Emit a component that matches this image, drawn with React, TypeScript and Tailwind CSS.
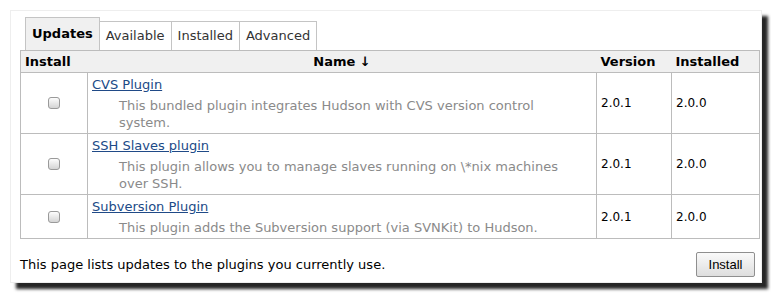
import React from "react";

const plugins = [
  {
    name: "CVS Plugin",
    desc: "This bundled plugin integrates Hudson with CVS version control system.",
    version: "2.0.1",
    installed: "2.0.0",
  },
  {
    name: "SSH Slaves plugin",
    desc: "This plugin allows you to manage slaves running on \\*nix machines over SSH.",
    version: "2.0.1",
    installed: "2.0.0",
  },
  {
    name: "Subversion Plugin",
    desc: "This plugin adds the Subversion support (via SVNKit) to Hudson.",
    version: "2.0.1",
    installed: "2.0.0",
  },
];

function Checkbox() {
  return (
    <div className="mx-auto h-[12px] w-[12px] rounded-[3px] border border-[#9a9a9a] bg-gradient-to-b from-[#fdfdfd] to-[#d4d4d4]" />
  );
}

export default function App() {
  return (
    <div className="h-[294px] w-[771px] bg-white pl-[10px] pt-[10px] font-['DejaVu_Sans',sans-serif] text-[12px] text-black">
      <div className="flex h-[273px] w-[752px] flex-col border border-[#eeeeee] bg-white pl-[9px] pr-[3px] shadow-[6px_6px_3px_rgba(0,0,0,0.85)]">
        {/* Tabs */}
        <div className="mt-[6px] flex items-end pl-[5px]">
          <div className="flex h-[33px] items-center border border-b-0 border-[#c4c4c4] bg-[#f0f0f0] px-[6px] text-[13px] font-bold">
            Updates
          </div>
          {["Available", "Installed", "Advanced"].map((t) => (
            <div
              key={t}
              className="flex h-[29px] items-center border border-b-0 border-l-0 border-[#c4c4c4] bg-white px-[6px] text-[13px] text-[#333]"
            >
              {t}
            </div>
          ))}
        </div>

        {/* Table */}
        <table className="w-[739px] table-fixed border-collapse border border-[#bcbcbc]">
          <colgroup>
            <col className="w-[67px]" />
            <col className="w-[509px]" />
            <col className="w-[75px]" />
            <col className="w-[88px]" />
          </colgroup>
          <thead>
            <tr className="h-[22px] bg-[#f0f0f0] text-[13px] font-bold">
              <th className="border-b border-[#bcbcbc] px-[4px] py-0 text-left">Install</th>
              <th className="border-b border-[#bcbcbc] px-[4px] py-0 text-center">Name ↓</th>
              <th className="border-b border-[#bcbcbc] px-[4px] py-0 text-left">Version</th>
              <th className="border-b border-[#bcbcbc] px-[4px] py-0 text-left">Installed</th>
            </tr>
          </thead>
          <tbody>
            {plugins.map((p) => (
              <tr key={p.name}>
                <td className="border border-[#bcbcbc] align-middle">
                  <Checkbox />
                </td>
                <td className="border border-[#bcbcbc] px-[4px] pt-[3px] pb-[2px] align-top">
                  <a href="#" className="block text-[13px] leading-[17px] text-[#204a87] underline">
                    {p.name}
                  </a>
                  <div className="mt-[4px] pl-[27px] pr-[20px] text-[13px] leading-[17px] text-[#8a8a8a]">
                    {p.desc}
                  </div>
                </td>
                <td className="border border-[#bcbcbc] px-[4px] align-middle">{p.version}</td>
                <td className="border border-[#bcbcbc] px-[4px] align-middle">{p.installed}</td>
              </tr>
            ))}
          </tbody>
        </table>

        {/* Footer */}
        <div className="mt-[13px] flex w-[739px] items-center justify-between">
          <span className="text-[13px]">This page lists updates to the plugins you currently use.</span>
          <button className="mr-[4px] h-[25px] w-[59px] rounded-[2px] border border-[#8f8f8f] bg-gradient-to-b from-[#fafafa] to-[#dedede] font-['Liberation_Sans',sans-serif] text-[13px]">
            Install
          </button>
        </div>
      </div>
    </div>
  );
}
